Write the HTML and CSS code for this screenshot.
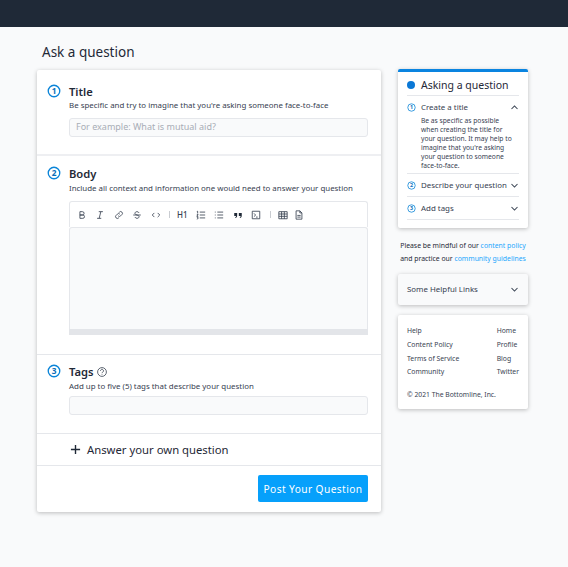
FILE: index.html
```html
<!DOCTYPE html>
<html lang="en">
<head>
<meta charset="utf-8">
<title>Ask a question</title>
<link rel="stylesheet" href="styles.css">
</head>
<body>
<header class="topbar"></header>
<div class="layout">
  <main class="main">
    <h1 class="page-title">Ask a question</h1>
    <form class="card form-card">
      <section class="section section-title">
        <span class="num"><svg viewBox="0 0 16 16"><circle cx="8" cy="8" r="6.6"/><text x="8" y="11">1</text></svg></span>
        <div class="section-body">
          <h2 class="heading">Title</h2>
          <p class="hint">Be specific and try to imagine that you're asking someone face-to-face</p>
          <div class="input placeholder">For example: What is mutual aid?</div>
        </div>
      </section>
      <section class="section section-editor">
        <span class="num"><svg viewBox="0 0 16 16"><circle cx="8" cy="8" r="6.6"/><text x="8" y="11">2</text></svg></span>
        <div class="section-body">
          <h2 class="heading">Body</h2>
          <p class="hint">Include all context and information one would need to answer your question</p>
          <div class="toolbar">
            <svg class="tool" viewBox="0 0 12 12"><path d="M3.5 2h3a2 2 0 0 1 0 4h-3zM3.5 6h3.5a2 2 0 0 1 0 4h-3.500z"/></svg>
            <svg class="tool" viewBox="0 0 12 12"><path d="M4.500 2h5M2.500 10h5M7 2 5 10"/></svg>
            <svg class="tool" viewBox="0 0 12 12"><path d="M5 7a2 2 0 0 0 3 0l1.500-1.500a2 2 0 0 0-3-3L6 3M7 5a2 2 0 0 0-3 0L2.500 6.500a2 2 0 0 0 3 3L6 9"/></svg>
            <svg class="tool" viewBox="0 0 12 12"><path d="M1.500 6h9M8.500 3.500C8 2.500 7 2 6 2 4.500 2 3.500 3 3.500 4S4.500 5.500 6 6s2.500 1 2.500 2S7.500 10 6 10c-1 0-2-.5-2.500-1.500"/></svg>
            <svg class="tool" viewBox="0 0 12 12"><path d="M4 3.500 1.500 6 4 8.500M8 3.500 10.500 6 8 8.500"/></svg>
            <span class="tool-sep"></span>
            <span class="tool-h1">H1</span>
            <svg class="tool" viewBox="0 0 12 12"><path d="M4.500 2.500h6.500M4.500 6h6.500M4.500 9.500h6.500M1 1.800 2 1.500v2.500M1 5.200h1.500L1 7.500h1.700M1 8.500h1.500L2 9.500l.6.600L1 11"/></svg>
            <svg class="tool" viewBox="0 0 12 12"><path d="M4 2.500h7M4 6h7M4 9.500h7M1 2.500h1M1 6h1M1 9.500h1"/></svg>
            <svg class="tool tool-fill" viewBox="0 0 12 12"><path d="M1.500 3.500h3.500v3C5 8.200 4.200 9.300 2.700 9.700V8.600c.6-.2 1-.7 1-1.300H1.500zM7 3.500h3.500v3c0 1.700-.8 2.800-2.300 3.200V8.600c.6-.2 1-.7 1-1.300H7z"/></svg>
            <svg class="tool" viewBox="0 0 12 12"><path d="M1.500 1.500h9v9h-9zM3.500 4l2 2-2 2M6 8.500h2"/></svg>
            <span class="tool-sep"></span>
            <svg class="tool" viewBox="0 0 12 12"><path d="M1 2h10v8.500H1zM1 4.800h10M1 7.600h10M4.300 2v8.500M7.600 2v8.500"/></svg>
            <svg class="tool tool-file" viewBox="0 0 12 12"><path d="M2.500 1h4.500l2.500 2.500V11h-7zM7 1v2.500h2.500M4 6.500h4M4 8.500h4"/></svg>
          </div>
          <div class="editor"><div class="editor-handle"></div></div>
        </div>
      </section>
      <section class="section section-tags">
        <span class="num"><svg viewBox="0 0 16 16"><circle cx="8" cy="8" r="6.6"/><text x="8" y="11">3</text></svg></span>
        <div class="section-body">
          <h2 class="heading">Tags
            <svg class="help" viewBox="0 0 12 12"><circle cx="6" cy="6" r="4.400"/><path d="M4.500 4.800a1.500 1.500 0 1 1 2.300 1.300c-.6.300-.8.600-.8 1.100M6 8.200v.6"/></svg>
          </h2>
          <p class="hint">Add up to five (5) tags that describe your question</p>
          <div class="input"></div>
        </div>
      </section>
      <section class="answer-row">
        <svg class="plus" viewBox="0 0 12 12"><path d="M6 1v10M1 6h10"/></svg>
        <span>Answer your own question</span>
      </section>
      <div class="post-row">
        <button type="button" class="post-btn">Post Your Question</button>
      </div>
    </form>
  </main>
  <aside class="sidebar">
    <div class="card guide">
      <div class="guide-head"><span class="dot"></span><span>Asking a question</span></div>
      <div class="step step-open">
        <div class="step-row">
          <span class="step-num"><svg viewBox="0 0 16 16"><circle cx="8" cy="8" r="6.600"/><text x="8" y="11">1</text></svg></span>
          <span class="step-label">Create a title</span>
          <svg class="chev" viewBox="0 0 12 12"><path d="M2 8l4-4 4 4"/></svg>
        </div>
        <p class="step-text">Be as specific as possible when creating the title for your question. It may help to imagine that you're asking your question to someone face-to-face.</p>
      </div>
      <div class="step">
        <div class="step-row">
          <span class="step-num"><svg viewBox="0 0 16 16"><circle cx="8" cy="8" r="6.600"/><text x="8" y="11">2</text></svg></span>
          <span class="step-label">Describe your question</span>
          <svg class="chev" viewBox="0 0 12 12"><path d="M2 4l4 4 4-4"/></svg>
        </div>
      </div>
      <div class="step">
        <div class="step-row">
          <span class="step-num"><svg viewBox="0 0 16 16"><circle cx="8" cy="8" r="6.600"/><text x="8" y="11">3</text></svg></span>
          <span class="step-label">Add tags</span>
          <svg class="chev" viewBox="0 0 12 12"><path d="M2 4l4 4 4-4"/></svg>
        </div>
      </div>
    </div>
    <p class="mindful">Please be mindful of our <a href="#">content policy</a><br>and practice our <a href="#">community guidelines</a></p>
    <div class="card links-toggle">
      <span>Some Helpful Links</span>
      <svg class="chev" viewBox="0 0 12 12"><path d="M2 4l4 4 4-4"/></svg>
    </div>
    <div class="card foot">
      <div class="foot-links">
        <a href="#">Help</a><a href="#">Home</a>
        <a href="#">Content Policy</a><a href="#">Profile</a>
        <a href="#">Terms of Service</a><a href="#">Blog</a>
        <a href="#">Community</a><a href="#">Twitter</a>
      </div>
      <p class="copyright">© 2021 The Bottomline, Inc.</p>
    </div>
  </aside>
</div>
</body>
</html>
```
FILE: styles.css
```css
* { box-sizing: border-box; }
html, body { margin: 0; padding: 0; }
body {
  background: #f9fafb;
  color: #1f2937;
  font-family: "Noto Sans", sans-serif;
  height: 567px;
  overflow: hidden;
}
a { color: inherit; text-decoration: none; }
h1, h2, p { margin: 0; font-weight: normal; }
.topbar { height: 27px; background: #1f2937; }
.layout {
  display: flex;
  align-items: flex-start;
  gap: 17px;
  padding-left: 37px;
}
.main { width: 344px; }
.page-title {
  font-size: 13.500px;
  line-height: 20px;
  padding: 15px 0 8px 5px;
}
.card {
  background: #fff;
  border-radius: 2px;
  box-shadow: 0 1px 4px rgba(0, 0, 0, .25);
}
.section {
  display: flex;
  gap: 8px;
  padding-left: 10px;
  padding-right: 13px;
  border-bottom: 1px solid #e5e7eb;
}
.section-title { height: 86px; padding-top: 14px; border-bottom-width: 2px; border-bottom-color: #eeeff2; }
.section-editor { height: 199px; padding-top: 10px; }
.section-tags { height: 79px; padding-top: 9px; }
.num { width: 14px; height: 14px; flex: none; }
.num svg, .step-num svg { display: block; width: 100%; height: 100%; }
.num circle, .step-num circle { fill: none; stroke: #0a84d8; stroke-width: 1.500; }
.num text, .step-num text {
  font: 700 9.500px "Noto Sans", sans-serif;
  fill: #0a6fb8;
  text-anchor: middle;
}
.section-body { flex: 1; min-width: 0; }
.heading {
  display: flex;
  align-items: center;
  gap: 2px;
  font-size: 11.200px;
  font-weight: 600;
  line-height: 15px;
}
.help { width: 12px; height: 12px; fill: none; stroke: #374151; stroke-width: .8; }
.hint { font-size: 7.900px; line-height: 13px; color: #374151; }
.section-editor .hint, .section-tags .hint { padding-top: .5px; }
.input {
  height: 18.500px;
  margin-top: 6px;
  background: #f9fafb;
  border: 1px solid #e5e7eb;
  border-radius: 3px;
  font-size: 9px;
  line-height: 16.500px;
  padding-left: 6px;
}
.placeholder { color: #a8adb6; }
.section-tags .input { margin-top: 3.500px; }
.toolbar {
  display: flex;
  align-items: center;
  gap: 8.500px;
  height: 26px;
  margin-top: 6.500px;
  padding-left: 6.500px;
  background: #fff;
  border: 1px solid #e5e7eb;
  border-bottom: 0;
  border-radius: 3px 3px 0 0;
}
.tool {
  width: 10px;
  height: 10px;
  flex: none;
  fill: none;
  stroke: #374151;
  stroke-width: 1;
}
.tool-fill { fill: #1f2937; stroke: none; }
.tool-file { margin-left: -2px; }
.tool-sep { width: 1px; height: 7px; background: #c9ccd1; flex: none; margin-right: -1.500px; }
.tool-h1 { font-size: 8px; font-weight: 500; line-height: 10px; width: 10px; flex: none; color: #374151; }
.editor {
  height: 108px;
  display: flex;
  align-items: flex-end;
  background: #f9fafb;
  border: 1px solid #e5e7eb;
  border-bottom: 0;
  border-radius: 3px 3px 0 0;
}
.editor-handle { flex: 1; height: 6px; margin: 0 -1px; background: #e3e5e9; }
.answer-row {
  display: flex;
  align-items: center;
  gap: 6px;
  height: 32px;
  padding-left: 33px;
  border-bottom: 1px solid #e5e7eb;
  font-size: 11.300px;
}
.plus { width: 11px; height: 11px; fill: none; stroke: #1f2937; stroke-width: 1.500; }
.post-row {
  display: flex;
  justify-content: flex-end;
  height: 46px;
  padding: 9px 13px 0 0;
}
.post-btn {
  width: 110px;
  height: 27px;
  padding: 0;
  border: 0;
  border-radius: 2px;
  background: #06a0fb;
  color: #fff;
  font: 400 10.200px "Noto Sans", sans-serif;
  letter-spacing: .4px;
}
.form-card { height: 442px; }
.sidebar { width: 130px; padding-top: 42px; }
.guide {
  height: 159px;
  border-top: 3px solid #0a84e0;
  padding: 0 9px;
}
.guide-head {
  display: flex;
  align-items: center;
  gap: 6px;
  height: 24px;
  padding-top: 3px;
  border-bottom: 1px solid #e5e7eb;
  font-size: 10.500px;
}
.dot { width: 8px; height: 8px; border-radius: 50%; background: #0a78d6; flex: none; }
.step { border-bottom: 1px solid #e5e7eb; height: 23px; }
.step-open { height: 78px; }
.step-row { display: flex; align-items: center; height: 22px; font-size: 7.900px; color: #374151; }
.step-num { width: 9px; height: 9px; flex: none; margin-right: 5px; }
.step-num circle { stroke-width: 1.400; }
.step-label { flex: 1; white-space: nowrap; }
.chev { width: 9px; height: 9px; fill: none; stroke: #374151; stroke-width: 1.400; flex: none; }
.step-text {
  font-size: 6.700px;
  line-height: 9.050px;
  padding: 0 4px 0 14px;
  margin-top: -2px;
  color: #374151;
}
.mindful {
  font-size: 6.850px;
  line-height: 13.400px;
  padding-top: 11px;
  text-align: center;
  white-space: nowrap;
}
.links-toggle {
  display: flex;
  align-items: center;
  justify-content: space-between;
  height: 31px;
  margin-top: 8px;
  padding: 0 9px;
  background: #f9fafb;
  font-size: 7.900px;
  color: #374151;
}
.mindful a { color: #1ea7fd; }
.foot {
  height: 94.500px;
  margin-top: 10px;
  padding: 9.500px 9px 0;
  font-size: 6.800px;
  color: #374151;
}
.foot-links {
  display: grid;
  grid-template-columns: 1fr auto;
  line-height: 13.600px;
}
.copyright { margin-top: 9.500px; line-height: 13px; }
```
